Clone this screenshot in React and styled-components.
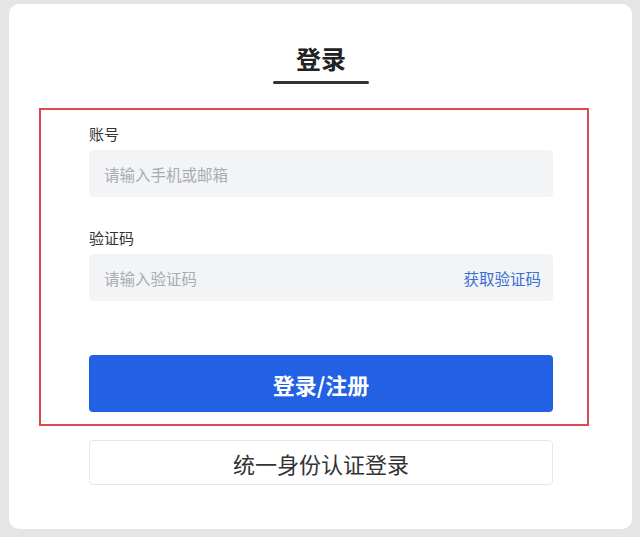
import React from 'react';
import styled, { createGlobalStyle } from 'styled-components';

const GlobalStyle = createGlobalStyle`
  html, body {
    margin: 0;
    padding: 0;
    background: #e4e5e7;
  }
  body {
    font-family: "Noto Sans CJK SC", "Noto Sans", sans-serif;
  }
`

const Page = styled.div`
  width: 640px;
  height: 537px;
  padding: 4px 8px 0 9px;
  box-sizing: border-box;
`

const Card = styled.div`
  width: 623px;
  height: 525px;
  background: #fff;
  border-radius: 10px;
  display: flex;
  flex-direction: column;
  box-sizing: border-box;
  padding-top: 36px;
`

const TitleWrap = styled.div`
  display: flex;
  flex-direction: column;
  align-items: center;
  margin-left: 1px;
`

const Title = styled.h1`
  margin: 0;
  font-size: 25px;
  line-height: 36px;
  font-weight: 700;
  color: #222;
`

const Underline = styled.div`
  width: 96px;
  height: 3px;
  border-radius: 2px;
  background: #333;
  margin-top: 5px;
`

const FormBox = styled.div`
  margin: 24px 0 0 30px;
  width: 550px;
  border: 2px solid #dc4a50;
  box-sizing: border-box;
  padding: 14px 34px 12px 48px;
  display: flex;
  flex-direction: column;
`

const Field = styled.div`
  display: flex;
  flex-direction: column;
  margin-bottom: ${(p) => p.$gap || 0}px;
`

const Label = styled.label`
  font-size: 15px;
  line-height: 20px;
  color: #333;
  margin-bottom: 6px;
`

const InputBox = styled.div`
  height: 47px;
  background: #f3f4f6;
  border-radius: 4px;
  display: flex;
  align-items: center;
  padding: 0 12px 0 15px;
`

const Input = styled.input`
  flex: 1;
  border: none;
  outline: none;
  background: transparent;
  font-family: inherit;
  font-size: 15.5px;
  color: #333;
  padding: 0;
  &::placeholder {
    color: #a8abb1;
  }
`

const CodeLink = styled.span`
  font-size: 15.5px;
  color: #3b6dd3;
  cursor: pointer;
`

const Primary = styled.button`
  height: 57px;
  width: 100%;
  border: none;
  border-radius: 4px;
  background: #2261e3;
  color: #fff;
  font-family: inherit;
  font-size: 22px;
  font-weight: 700;
  cursor: pointer;
`

const Secondary = styled.button`
  margin: 14px 0 0 80px;
  width: 464px;
  height: 45px;
  background: #fff;
  border: 1px solid #e6e7ea;
  border-radius: 4px;
  color: #333;
  font-family: inherit;
  font-size: 22px;
  cursor: pointer;
`

export default function App() {
  return (
    <Page>
      <GlobalStyle />
      <Card>
        <TitleWrap>
          <Title>登录</Title>
          <Underline />
        </TitleWrap>
        <FormBox>
          <Field $gap={31}>
            <Label>账号</Label>
            <InputBox>
              <Input placeholder="请输入手机或邮箱" />
            </InputBox>
          </Field>
          <Field $gap={54}>
            <Label>验证码</Label>
            <InputBox>
              <Input placeholder="请输入验证码" />
              <CodeLink>获取验证码</CodeLink>
            </InputBox>
          </Field>
          <Primary>登录/注册</Primary>
        </FormBox>
        <Secondary>统一身份认证登录</Secondary>
      </Card>
    </Page>
  )
}
